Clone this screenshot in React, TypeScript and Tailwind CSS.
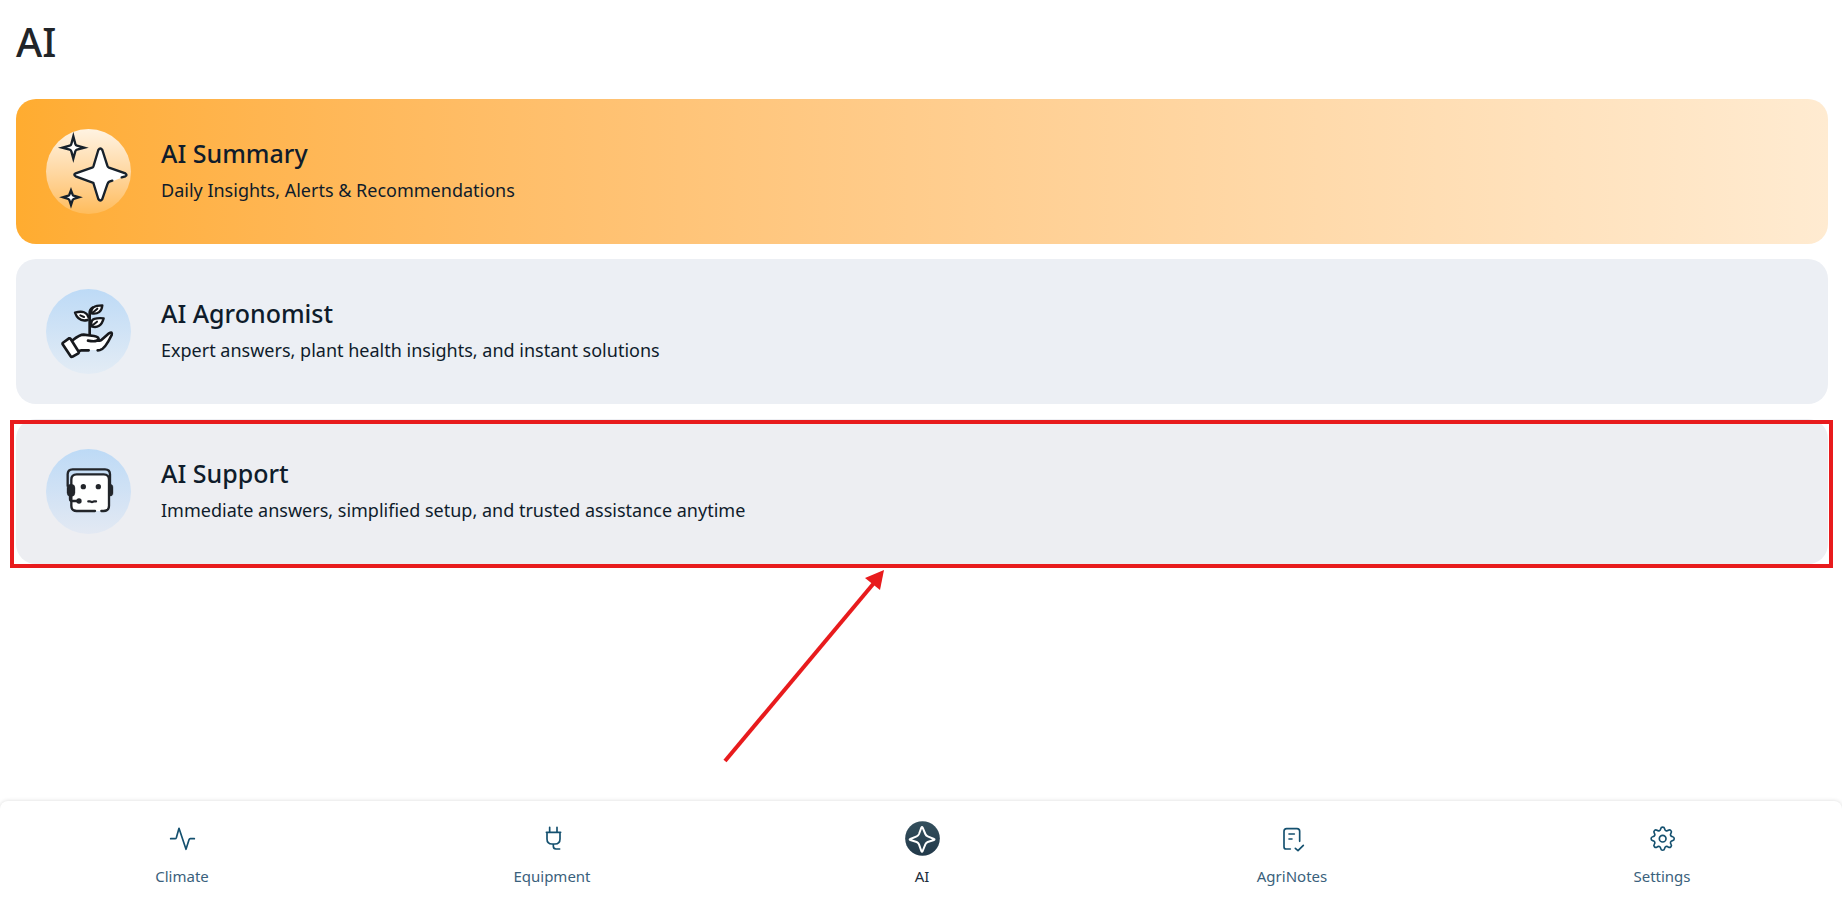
import React from 'react';
import clsx from 'clsx';

const SparklesIcon = () => (
  <svg viewBox="48 42 255 255" className="w-full h-full" fill="#fff" stroke="#17212b" strokeWidth="7" strokeLinecap="round" aria-hidden="true">
    <path d="M130 64 L136 87 Q137 91 141 92 L163 98 L141 104 Q137 105 136 109 L130 131 L124 109 Q123 105 119 104 L97 98 L119 92 Q123 91 124 87Z" strokeWidth="7" strokeMiterlimit="10" />
    <path d="M123 226 L128 239 Q129 241 131 242 L147 247 L131 252 Q129 253 128 255 L123 270 L118 255 Q117 253 115 252 L99 247 L115 242 Q117 241 118 239Z" strokeWidth="7" strokeMiterlimit="10" />
    <path stroke="none" d="M205 105 Q211 96 217 105 L233 156 L286 175 Q295 180 286 184 L234 204 L217 252 Q211 261 205 252 L190 204 L137 184 Q129 179 137 175 L190 156Z" />
    <path fill="none" d="M247 197 L238 200 Q234 202 232 208 L217 252 Q211 261 205 252 L190 204 L137 184 Q129 179 137 175 L188 157 Q190 156 191 152 L205 105 Q211 96 217 105 L232 152 Q233 156 237 158 L286 175 Q293 180 286 184 L275 187" />
  </svg>
);

const PlantHandIcon = () => (
  <svg viewBox="48 42 255 255" className="w-full h-full" fill="#fff" stroke="#17191d" strokeWidth="8" strokeLinecap="round" strokeLinejoin="round" aria-hidden="true">
    <path d="M179 181 V115 Q179 103 188 98" fill="none" />
    <path d="M184 115 Q180 91 217 91 Q214 120 184 115Z" strokeWidth="7" />
    <path d="M173 135 Q145 142 135 113 Q169 103 176 128" strokeWidth="7" />
    <path d="M184 152 V143 Q184 127 221 130 Q212 163 184 154Z" strokeWidth="7" />
    <path d="M188 113 L202 101 M162 126 L151 121 M188 151 L201 140" fill="none" strokeWidth="6" />
    <path stroke="none" d="M126 195 Q148 176 162 179 L196 184 Q208 187 205 194 L212 198 L238 175 Q249 168 245 181 Q223 224 208 225 L153 225 L144 236Z" />
    <path fill="none" d="M128 196 Q149 179 161 179 L192 183 Q209 186 205 194 Q199 202 174 197 M205 197 Q211 198 214 195 L237 175 Q248 168 245 180 Q225 222 210 225 L203 226 M176 226 H154 Q149 226 146 231" />
    <path d="M98 204 L117 190 Q120 189 122 192 L146 230 Q147 233 145 235 L128 245 Q124 247 122 244 L98 208 Q97 206 98 204Z" />
  </svg>
);

const HeadsetBotIcon = () => (
  <svg viewBox="48 42 255 255" className="w-full h-full" fill="none" stroke="#22252a" strokeWidth="7" strokeLinecap="round" strokeLinejoin="round" aria-hidden="true">
    <rect x="124" y="118" width="113" height="110" rx="14" fill="#fff" stroke="none" />
    <path d="M113 152 V118 Q113 103 128 103 H225 Q240 103 240 118 V152" />
    <path d="M195 228 H140 Q124 228 124 212 V134 Q124 118 140 118 H221 Q237 118 237 134 V212 Q237 228 221 228 H214" />
    <path d="M120 183 V192 Q120 198 126 198 H145" />
    <rect x="111" y="148" width="24" height="36" rx="11" fill="#22252a" strokeWidth="1" />
    <path d="M237 148 Q249 146 249 157 V174 Q249 185 237 183Z" fill="#22252a" strokeWidth="1" />
    <circle cx="147" cy="198" r="8" fill="#22252a" stroke="none" />
    <circle cx="160" cy="155" r="8" fill="#22252a" stroke="none" />
    <circle cx="205" cy="155" r="8" fill="#22252a" stroke="none" />
    <path d="M175 199 H179 Q186 203 193 199 H198" />
  </svg>
);

const features = [
  {
    title: 'AI Summary',
    description: 'Daily Insights, Alerts & Recommendations',
    icon: SparklesIcon,
    card: 'bg-linear-to-r from-[#ffac30] to-[#ffebd1]',
    circle: 'bg-linear-to-b from-[#fff3e2] to-[#ffbc5a]',
  },
  {
    title: 'AI Agronomist',
    description: 'Expert answers, plant health insights, and instant solutions',
    icon: PlantHandIcon,
    card: 'bg-[#eceff4]',
    circle: 'bg-linear-to-b from-[#bddaf6] to-[#e3ecf5]',
  },
  {
    title: 'AI Support',
    description: 'Immediate answers, simplified setup, and trusted assistance anytime',
    icon: HeadsetBotIcon,
    card: 'bg-[#edeef2]',
    circle: 'bg-linear-to-b from-[#bddaf6] to-[#e3e9f3]',
    highlighted: true,
  },
];

const ClimateIcon = () => (
  <svg viewBox="100 90 105 105" className="w-[35px] h-[35px]" fill="none" stroke="#14506f" strokeWidth="5" strokeLinecap="round" strokeLinejoin="round" aria-hidden="true">
    <path d="M117 143 H130 Q133 143 134 140 L142 112 L163 175 L172 146 Q173 143 176 143 H188" />
  </svg>
);

const EquipmentIcon = () => (
  <svg viewBox="101 90 105 105" className="w-[35px] h-[35px]" fill="none" stroke="#14506f" strokeWidth="5" strokeLinecap="round" strokeLinejoin="round" aria-hidden="true">
    <path d="M145 109 V124 M167 109 V124 M135 124 H178 M137 124 V144 Q137 159 152 159 H161 Q176 159 176 144 V124 M156 160 V166 Q156 174 164 174 H175" />
  </svg>
);

const AiIcon = () => (
  <svg viewBox="105 89 105 105" className="w-[35px] h-[35px]" aria-hidden="true">
    <defs>
      <linearGradient id="aiBadge" x1="0" y1="0" x2="0" y2="1">
        <stop offset="0" stopColor="#34505d" />
        <stop offset="1" stopColor="#22394a" />
      </linearGradient>
    </defs>
    <circle cx="157.500" cy="141.500" r="52" fill="url(#aiBadge)" />
    <path
      d="M154 109 Q156 105 158 109 L166 128 Q168 133 173 135 L192 143 Q195 144 192 146 L173 152 Q168 154 166 159 L158 179 Q156 183 154 179 L147 159 Q145 154 140 152 L121 146 Q117 144 121 143 L140 135 Q145 133 147 128Z"
      fill="none"
      stroke="#fff"
      strokeWidth="6"
      strokeLinejoin="round"
    />
  </svg>
);

const AgriNotesIcon = () => (
  <svg viewBox="102 90 105 105" className="w-[35px] h-[35px]" fill="none" stroke="#14506f" strokeWidth="5" strokeLinecap="round" strokeLinejoin="round" aria-hidden="true">
    <path d="M148 174 H136 Q129 174 129 167 V121 Q129 113 137 113 H168 Q176 113 176 121 V151 M144 129 H160 M144 144 H153 M163 172 L171 179 L187 163" />
  </svg>
);

// Smooth closed curve through eight teeth, two control points for each tooth and each valley
const gearPath = (cx: number, cy: number, outer: number, inner: number) => {
  const points = Array.from({ length: 32 }, (_, i) => {
    const side = i % 2 === 0 ? -8 : 8;
    const step = Math.floor(i / 2);
    const angle = ((step * 22.5 + side) * Math.PI) / 180;
    const r = step % 2 === 0 ? outer : inner;
    return [cx + r * Math.cos(angle), cy + r * Math.sin(angle)];
  });
  const mid = (i: number) => {
    const a = points[i % 32];
    const b = points[(i + 1) % 32];
    return `${(a[0] + b[0]) / 2} ${(a[1] + b[1]) / 2}`;
  };
  return `M${mid(31)} ` + points.map((p, i) => `Q${p[0]} ${p[1]} ${mid(i)}`).join(' ') + 'Z';
};

const SettingsIcon = () => (
  <svg viewBox="106 91 105 105" className="w-[35px] h-[35px]" fill="none" stroke="#14506f" strokeWidth="5" strokeLinejoin="round" aria-hidden="true">
    <circle cx="159" cy="144" r="10" />
    <path d={gearPath(159, 144, 35, 26)} />
  </svg>
);

const tabs = [
  { label: 'Climate', icon: ClimateIcon },
  { label: 'Equipment', icon: EquipmentIcon },
  { label: 'AI', icon: AiIcon, active: true },
  { label: 'AgriNotes', icon: AgriNotesIcon },
  { label: 'Settings', icon: SettingsIcon },
];

const Highlight = () => (
  <>
    <div className="absolute -left-1.5 -right-[5px] top-px -bottom-1 border-4 border-[#e81b1d] pointer-events-none" />
    <svg viewBox="0 0 166 196" className="absolute top-full left-1/2 -ml-[200px] mt-1 w-[166px] h-[196px] pointer-events-none" aria-hidden="true">
      <path d="M3 193 L152 15" stroke="#e81b1d" strokeWidth="4" />
      <path d="M162 2 L143 10 L158 22Z" fill="#e81b1d" />
    </svg>
  </>
);

const App = () => {
  return (
    <div className="min-h-screen flex flex-col bg-white font-['Noto_Sans',sans-serif]">
      <main className="flex-1 pl-4 pr-3.5 pt-4">
        <h1 className="text-[40px] leading-[51px] pb-8 font-medium text-[#212529]">AI</h1>

        <div className="flex flex-col gap-[15px]">
          {features.map(({ title, description, icon: Icon, card, circle, highlighted }) => (
            <div key={title} className="relative">
              <a href="#" className={clsx('flex items-center gap-[30px] p-[30px] rounded-[20px]', card)}>
                <div className={clsx('w-[85px] h-[85px] shrink-0 rounded-full', circle)}>
                  <Icon />
                </div>
                <div className="text-[#0f1c2b]">
                  <h2 className="text-[25px] leading-[34px] mb-0.5 font-medium">{title}</h2>
                  <p className="text-[18px] leading-9">{description}</p>
                </div>
              </a>
              {highlighted && <Highlight />}
            </div>
          ))}
        </div>
      </main>

      {/* Bottom navigation */}
      <nav className="grid grid-cols-5 gap-2.5 pl-0.5 pt-5 pb-[9px] bg-white rounded-t-lg shadow-[0_0_4px_rgba(0,0,0,0.15)]">
        {tabs.map(({ label, icon: Icon, active }) => (
          <a
            key={label}
            href="#"
            className={clsx('flex flex-col items-center gap-2 text-[15px] leading-6', active ? 'text-[#1c2c3c]' : 'text-[#3a617c]')}
          >
            <Icon />
            <span>{label}</span>
          </a>
        ))}
      </nav>
    </div>
  );
};

export default App;
